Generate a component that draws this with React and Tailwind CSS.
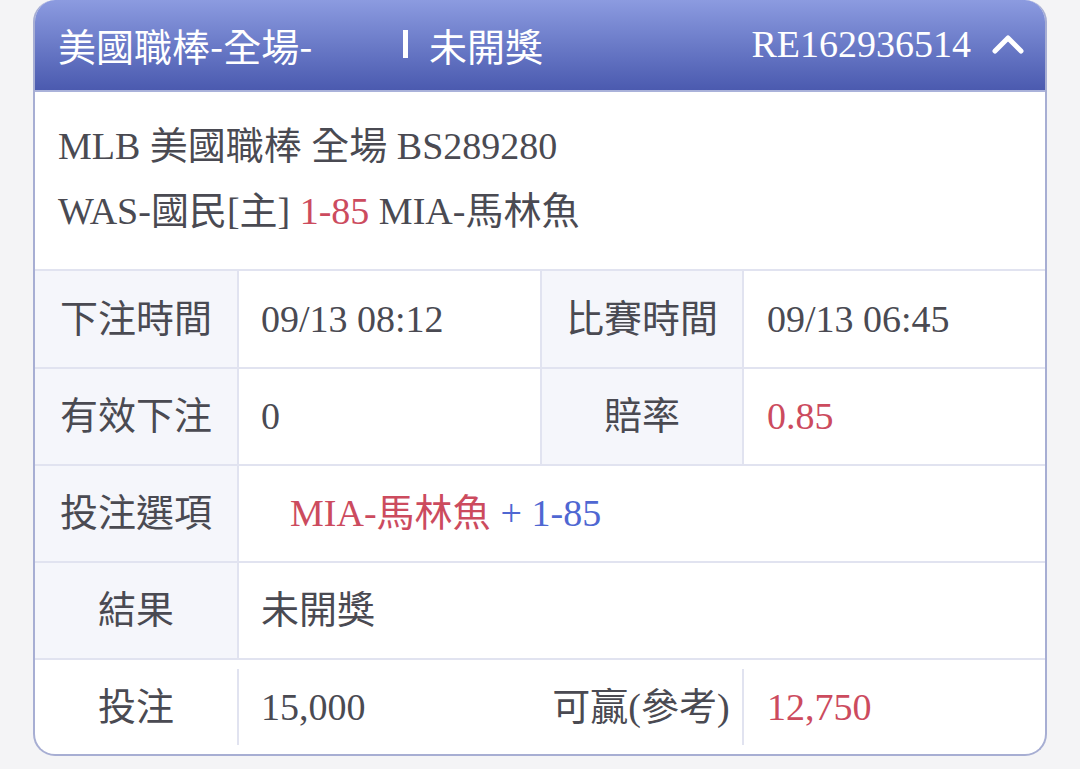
import React from 'react';

const red = 'text-[#cc4b5e]';

const ChevronUp = () => (
  <svg width="34" height="22" viewBox="0 0 34 22" fill="none" stroke="white" strokeWidth="5" strokeLinecap="round" strokeLinejoin="round">
    <polyline points="4,18 17,5 30,18" />
  </svg>
);

const Label = ({ children, plain }) => (
  <div className={`flex items-center justify-center ${plain ? '' : 'bg-[#f5f6fb]'}`}>{children}</div>
);

const Value = ({ children, className = '' }) => (
  <div className={`flex items-center border-l-2 border-[#e1e3f0] px-[22px] ${className}`}>{children}</div>
);

export default function App() {
  return (
    <div className="min-h-[769px] bg-[#f4f4f6] px-[33px] font-['Liberation_Serif','Noto_Sans_CJK_TC',serif] text-[38px] text-[#4a4a52]">
      <div className="overflow-hidden rounded-[22px] border-2 border-t-0 border-[#a7aed3] bg-white">
        {/* header */}
        <div className="flex h-[92px] items-center border-b-2 border-[#aab2da] bg-gradient-to-b from-[#8c9be0] to-[#4b5aaf] pb-[2px] pl-[23px] pr-[20px] text-white">
          <span className="w-[345px] font-['Noto_Sans_CJK_TC',sans-serif]">美國職棒-全場-</span>
          <span className="h-[28px] w-[5px] bg-white" />
          <span className="ml-[21px] font-['Noto_Sans_CJK_TC',sans-serif]">未開獎</span>
          <span className="ml-auto">RE162936514</span>
          <span className="ml-[20px] flex"><ChevronUp /></span>
        </div>

        {/* match info */}
        <div className="px-[23px] pb-[25px] pt-[22px] leading-[65px]">
          <div>MLB 美國職棒 全場 BS289280</div>
          <div>WAS-國民[主] <span className={red}>1-85</span> MIA-馬林魚</div>
        </div>

        {/* details */}
        <div className="grid h-[98px] grid-cols-[2fr_3fr_2fr_3fr] border-t-2 border-[#e1e3f0]">
          <Label>下注時間</Label>
          <Value>09/13 08:12</Value>
          <div className="flex items-center justify-center border-l-2 border-[#e1e3f0] bg-[#f5f6fb]">比賽時間</div>
          <Value className="px-[23px]">09/13 06:45</Value>
        </div>
        <div className="grid h-[97px] grid-cols-[2fr_3fr_2fr_3fr] border-t-2 border-[#e1e3f0]">
          <Label>有效下注</Label>
          <Value>0</Value>
          <div className="flex items-center justify-center border-l-2 border-[#e1e3f0] bg-[#f5f6fb]">賠率</div>
          <Value className={`px-[23px] ${red}`}>0.85</Value>
        </div>
        <div className="grid h-[97px] grid-cols-[2fr_8fr] border-t-2 border-[#e1e3f0]">
          <Label>投注選項</Label>
          <Value className="pl-[51px]">
            <span className={red}>MIA-馬林魚</span>
            <span className="ml-[10px] text-[#4f67d2]">+ 1-85</span>
          </Value>
        </div>
        <div className="grid h-[97px] grid-cols-[2fr_8fr] border-t-2 border-[#e1e3f0]">
          <Label>結果</Label>
          <Value>未開獎</Value>
        </div>
        <div className="grid h-[96px] grid-cols-[2fr_3fr_2fr_3fr] border-t-2 border-[#e1e3f0] py-[9px]">
          <Label plain>投注</Label>
          <Value>15,000</Value>
          <div className="flex items-center justify-center">可贏(參考)</div>
          <Value className={`px-[23px] ${red}`}>12,750</Value>
        </div>
      </div>
    </div>
  );
}
